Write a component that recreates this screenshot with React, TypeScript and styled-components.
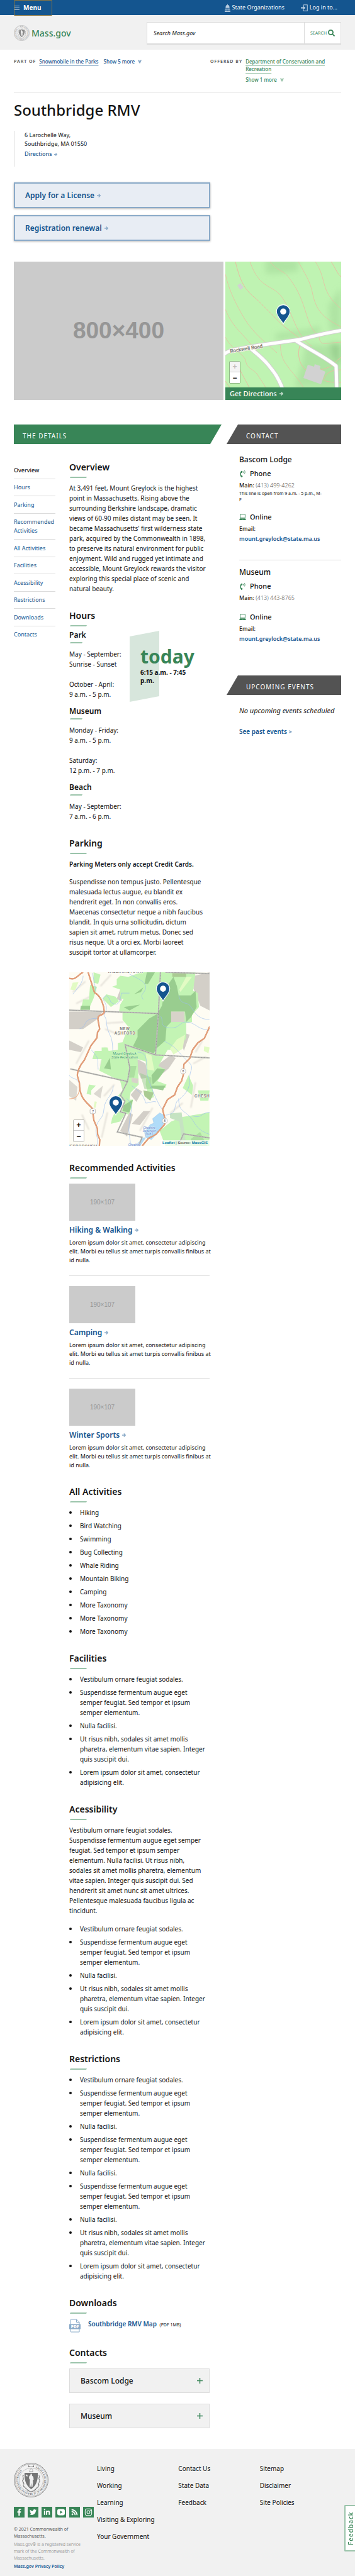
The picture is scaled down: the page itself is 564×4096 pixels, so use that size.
import React from "react";
import styled, { createGlobalStyle, css } from "styled-components";
import {
  FaFacebookF,
  FaInstagram,
  FaLinkedinIn,
  FaPhoneVolume,
  FaRss,
  FaSearch,
  FaTwitter,
} from "react-icons/fa";

const blue = "#14558f";
const blueSoft = "#8aaac8";
const green = "#388557";
const greenSoft = "#9bc4ab";
const ink = "#141414";
const line = "#dcdcdc";
const panel = "#f1f1f1";
const slate = "#535353";

const GlobalStyle = createGlobalStyle`
  *, *::before, *::after { box-sizing: border-box; }
  body {
    margin: 0;
    background: #fff;
    color: ${ink};
    font: 400 10px/16px "Noto Sans", "Open Sans", sans-serif;
  }
  h1, h2, h3, p, ul, address { margin: 0; padding: 0; font-style: normal; }
  a { color: ${blue}; text-decoration: none; }
  button, input { font-family: inherit; }
  svg { display: block; flex: none; }
`;

/* ---------- shared drawings ---------- */

const Arrow = ({ size = 6, color = blueSoft }: { size?: number; color?: string }) => (
  <svg width={size} height={size} viewBox="0 0 12 12" fill="none" stroke={color} strokeWidth="3" aria-hidden>
    <path d="M0 6h10M5.500 1l5 5-5 5" />
  </svg>
);

const Chevron = ({ color, size = 6 }: { color: string; size?: number }) => (
  <svg width={size} height={size} viewBox="0 0 12 12" fill={color} aria-hidden>
    <path d="M0 1h4l2 3 2-3h4L7.500 11h-3z" />
  </svg>
);

const Seal = ({ size, color, id }: { size: number; color: string; id: string }) => (
  <svg width={size} height={size} viewBox="0 0 110 110" fill="none" stroke={color} role="img" aria-label="Massachusetts seal">
    <defs>
      <path id={id} d="M55 14a41 41 0 1 1-.1 0" />
    </defs>
    <circle cx="55" cy="55" r="54" strokeWidth="1.500" />
    <circle cx="55" cy="55" r="51" strokeWidth="1" />
    <circle cx="55" cy="55" r="38" strokeWidth="1.500" strokeDasharray="1 1" />
    <text fill={color} stroke="none" fontFamily="Liberation Serif, serif" fontSize="9" fontWeight="700">
      <textPath href={`#${id}`} startOffset="14">
        SIGILLUM REIPUBLICÆ MASSACHUSETTENSIS
      </textPath>
    </text>
    <path d="M46 8l5 3h8l5-3v6l-5-2h-8l-5 2z" fill={color} stroke="none" />
    <path d="M50 28c1-6 3-9 5-10 3 2 6 5 5 10zM48 29h14" strokeWidth="1" />
    <path d="M34 32h42c1 20-3 40-21 52-18-12-22-32-21-52z" fill={color} stroke="none" />
    <path d="M31 40c-6 2 2 8-2 14s4 8 2 15 5 9 8 13 9 8 16 10c7-2 13-6 16-10s10-6 8-13 6-9 2-15 4-12-2-14" strokeWidth="3" strokeDasharray="3 1" />
    <path d="M41 36l1 3h3l-2 2 1 3-3-2-3 2 1-3-2-2h3z" fill="#f1f1f1" stroke="none" />
    <path d="M53 35h4l1 6 4 4 1 9-3 1 1 8-2 13h-3l-1-12-2 12h-3l1-22-3-5 1-7 4-3z" fill="#f1f1f1" stroke="none" />
  </svg>
);

const Capitol = () => (
  <svg width="9" height="13" viewBox="0 0 24 34" fill="#b8cce0" aria-hidden>
    <path d="M11 0h2v4h-2zM12 4c5 0 8 4 8 9v3H4v-3c0-5 3-9 8-9zM3 17h18v2H3zM4 20h2v3H4zM9 20h2v3H9zM14 20h2v3h-2zM18 20h2v3h-2zM1 24h22v3H1zM1 28h3v3H1zM7 28h3v3H7zM13 28h3v3h-3zM20 28h3v3h-3zM0 31h24v3H0z" />
  </svg>
);

const LoginMark = () => (
  <svg width="11" height="11" viewBox="0 0 30 30" aria-hidden>
    <path d="M11 2h17v26H11v-5M11 2v6" fill="none" stroke="#b8cce0" strokeWidth="3" />
    <path d="M0 12h10V6l10 9-10 9v-6H0z" fill="#b8cce0" />
  </svg>
);

const Laptop = () => (
  <svg width="11" height="10" viewBox="0 0 30 28" aria-hidden>
    <path d="M4 2h22v16H4z" fill="none" stroke={green} strokeWidth="2.500" />
    <path d="M3 20h24l3 8H0z" fill={green} />
    <path d="M12 24h6v2h-6z" fill={greenSoft} />
  </svg>
);

const PdfMark = () => (
  <svg width="18" height="22" viewBox="0 0 36 44" aria-hidden>
    <path d="M5 2h18l9 9v31H5zM23 2v9h9" fill="#fff" stroke={blueSoft} strokeWidth="2" />
    <rect y="17" width="36" height="16" fill={blueSoft} />
    <text x="18" y="30" textAnchor="middle" fill="#fff" fontFamily="Noto Sans, sans-serif" fontSize="13" fontWeight="900">
      PDF
    </text>
  </svg>
);

const markerPath = "M0 0C-6-14-29-32-29-53a29 29 0 0 1 58 0C29-32 6-14 0 0z";

const Marker = ({ x, y, k = 1 }: { x: number; y: number; k?: number }) => (
  <g transform={`translate(${x} ${y}) scale(${k})`}>
    <path d={markerPath} fill={blue} stroke="#fff" strokeWidth="3" />
    <circle cy="-53" r="13" fill="#fff" />
  </g>
);

/* ---------- top of page ---------- */

const Page = styled.div`
  position: relative;
  width: 100%;
`;

const TopBar = styled.nav`
  display: flex;
  align-items: center;
  height: 24px;
  padding: 0 28px 0 22px;
  background: ${blue};
`;

const MenuButton = styled.button`
  display: flex;
  align-items: center;
  gap: 6px;
  width: 61px;
  height: 25px;
  margin: 0 auto 0 0;
  padding: 0;
  border: 1px solid #8a7642;
  border-radius: 1px;
  background: none;
  color: #fff;
  font-size: 10px;
  font-weight: 700;
`;

const Bars = styled.span`
  width: 8px;
  height: 7px;
  border: solid #b8cce0;
  border-width: 1px 0;
  background: linear-gradient(#b8cce0, #b8cce0) center / 100% 1px no-repeat;
`;

const TopLink = styled.a`
  display: flex;
  align-items: center;
  gap: 3px;
  margin-left: 26px;
  color: #fff;
  font-size: 9px;
  font-weight: 400;
`;

const BrandBar = styled.header`
  display: flex;
  align-items: center;
  justify-content: space-between;
  height: 55px;
  padding: 6px 22px 4px;
  background: ${panel};
`;

const Brand = styled.a`
  display: flex;
  align-items: center;
  gap: 3px;
  color: ${green};
  font-size: 14px;
  font-weight: 500;
`;

const SearchForm = styled.form`
  display: flex;
  flex: 0 1 309px;
  height: 36px;
  border: 1px solid ${line};
  border-bottom-width: 2px;
  background: #fff;
`;

const SearchInput = styled.input`
  flex: 1;
  min-width: 0;
  padding: 0 10px;
  border: 0;
  outline: 0;
  background: none;
  font-size: 9px;
  font-style: italic;
  &::placeholder { color: ${ink}; opacity: 1; }
`;

const SearchButton = styled.button`
  display: flex;
  align-items: center;
  justify-content: center;
  gap: 2px;
  width: 58px;
  padding: 0;
  border: 0;
  border-left: 1px solid ${line};
  background: none;
  color: ${green};
  font-size: 7px;
  svg { font-size: 11px; }
`;

const Wrap = styled.div`
  padding: 0 22px;
`;

const Relations = styled.div`
  display: flex;
  justify-content: space-between;
  height: 68px;
  padding-top: 13px;
  border-bottom: 1px solid ${line};
  font-size: 8px;
  font-weight: 500;
  line-height: 12px;
`;

const Relation = styled.div<{ $width?: string }>`
  display: flex;
  width: ${(p) => p.$width ?? "auto"};
`;

const RelationLabel = styled.span`
  flex: none;
  margin-right: 5px;
  color: ${slate};
  font-size: 7px;
  font-weight: 600;
  letter-spacing: 1px;
  text-transform: uppercase;
`;

const RelationLinks = styled.div<{ $stack?: boolean }>`
  display: flex;
  flex-direction: ${(p) => (p.$stack ? "column" : "row")};
  align-items: flex-start;
  gap: ${(p) => (p.$stack ? 5 : 8)}px;
`;

const LineLink = styled.a<{ $green?: boolean }>`
  color: ${(p) => (p.$green ? green : blue)};
  text-decoration: underline 1px ${(p) => (p.$green ? greenSoft : blueSoft)};
  text-decoration-skip-ink: none;
  text-underline-offset: 3px;
`;

const MoreButton = styled.button<{ $green?: boolean }>`
  display: flex;
  align-items: center;
  gap: 5px;
  padding: 0;
  border: 0;
  background: none;
  color: ${(p) => (p.$green ? green : blue)};
  font-size: 8px;
  font-weight: 500;
  line-height: 12px;
`;

const Title = styled.h1`
  margin: 12px 0 17px;
  font-size: 24px;
  font-weight: 500;
  line-height: 32px;
`;

const AddressBlock = styled.address`
  height: 57px;
  padding: 0 0 0 16px;
  border-left: 1px solid ${line};
  font-size: 9px;
  line-height: 14px;
`;

const ArrowLink = styled.a<{ $size?: number }>`
  display: flex;
  align-items: center;
  gap: 4px;
  font-size: ${(p) => p.$size ?? 9}px;
  font-weight: ${(p) => (p.$size === 12 ? 600 : 500)};
`;

const DirectionsLink = styled(ArrowLink)`
  gap: 3px;
  margin-top: 2px;
`;

const Actions = styled.div`
  display: flex;
  flex-direction: column;
  gap: 11px;
  width: 60%;
  margin: 25px 0 33px;
`;

const ActionButton = styled.a`
  display: flex;
  align-items: center;
  gap: 4px;
  height: 41px;
  padding: 0 16px;
  border: 2px solid ${blueSoft};
  background: #e8edf4;
  box-shadow: 0 1px 3px rgba(0, 0, 0, 0.3);
  font-size: 12px;
  font-weight: 600;
`;

const Hero = styled.div`
  display: grid;
  grid-template-columns: minmax(0, 333fr) minmax(0, 184fr);
  gap: 3px;
  height: 220px;
`;

const Placeholder = styled.div<{ $size: number; $bold?: boolean }>`
  display: flex;
  align-items: center;
  justify-content: center;
  background: #cbcbcb;
  color: #969696;
  font: ${(p) => (p.$bold ? 700 : 400)} ${(p) => p.$size}px "Liberation Sans Narrow", "Liberation Sans", sans-serif;
`;

const MapPanel = styled.div`
  position: relative;
  overflow: hidden;
  background: #bff3b2;
  > svg { width: 100%; height: 100%; }
`;

const HeroMap = styled.div`
  display: grid;
  grid-template-rows: minmax(0, 1fr) 20px;
`;

const MapCta = styled.a`
  display: flex;
  align-items: center;
  gap: 4px;
  padding: 0 7px;
  background: ${green};
  color: #fff;
  font-size: 11px;
  font-weight: 500;
`;

const ZoomControl = styled.div`
  position: absolute;
  bottom: 6px;
  left: 6px;
  display: flex;
  flex-direction: column;
  width: 18px;
  border: 1px solid rgba(0, 0, 0, 0.25);
  border-radius: 2px;
  button {
    height: 17px;
    padding: 0;
    border: 0;
    background: #fff;
    color: #000;
    font: 700 12px/16px "Liberation Sans", sans-serif;
  }
  button:first-child { border-bottom: 1px solid #ccc; }
  button:disabled { background: #f4f4f4; color: #bbb; }
`;

const MapCredit = styled.div`
  position: absolute;
  right: 0;
  bottom: 0;
  padding: 0 3px;
  background: rgba(255, 255, 255, 0.7);
  color: #333;
  font: 400 6px/9px "Liberation Sans", sans-serif;
  a { color: #0078a8; font-weight: 700; }
`;

/* ---------- columns ---------- */

const Columns = styled.main`
  display: grid;
  grid-template-columns: minmax(0, 1fr) 182px;
  column-gap: 6px;
  padding: 39px 22px 33px;
`;

const Banner = styled.h2<{ $side?: boolean }>`
  display: flex;
  align-items: center;
  height: 31px;
  margin-right: ${(p) => (p.$side ? 0 : 2)}px;
  padding: 4px 0 0 ${(p) => (p.$side ? 31 : 14)}px;
  background: ${(p) => (p.$side ? slate : green)};
  color: #fff;
  font-size: 10px;
  font-weight: 400;
  letter-spacing: 1px;
  text-transform: uppercase;
  clip-path: ${(p) =>
    p.$side ? "polygon(18px 0, 100% 0, 100% 100%, 0 100%)" : "polygon(0 0, 100% 0, calc(100% - 18px) 100%, 0 100%)"};
`;

const Details = styled.div`
  display: grid;
  grid-template-columns: 66px minmax(0, 1fr);
  column-gap: 22px;
  padding: 27px 21px 0 0;
`;

const SideNav = styled.nav`
  display: flex;
  flex-direction: column;
  padding-top: 1px;
`;

const SideLink = styled.a<{ $current?: boolean }>`
  padding: 7px 0 6px;
  border-bottom: 1px solid ${line};
  color: ${(p) => (p.$current ? ink : blue)};
  font-size: 9px;
  font-weight: ${(p) => (p.$current ? 500 : 400)};
  line-height: 14px;
  &:nth-child(even) { padding-top: 6px; }
  &:last-child { border: 0; }
`;

const Section = styled.section<{ $gap?: number }>`
  & + & { margin-top: ${(p) => p.$gap ?? 23}px; }
`;

const slantBar = css`
  &::after {
    content: "";
    display: block;
    height: 2px;
    margin-left: 1px;
    background: ${greenSoft};
    clip-path: polygon(1px 0, 100% 0, calc(100% - 1px) 100%, 0 100%);
  }
`;

const SectionTitle = styled.h2`
  margin-bottom: 8px;
  font-size: 14px;
  font-weight: 600;
  line-height: 20px;
  ${slantBar}
  &::after { width: 27px; margin-top: 5px; }
`;

const HoursTitle = styled.h3`
  margin: 11px 0 9px;
  font-size: 12px;
  font-weight: 600;
  line-height: 16px;
  ${slantBar}
  &::after { width: 20px; margin-top: 3px; }
  &:first-child { margin-top: -2px; }
`;

const Prose = styled.p`
  margin-right: 4px;
`;

const HoursRow = styled.div`
  display: flex;
`;

const HoursList = styled.div`
  flex: none;
  width: 96px;
  p + p { margin-top: 16px; }
`;

const Today = styled.div`
  position: relative;
  height: 113px;
  margin-top: -1px;
  padding: 22px 20px 0 17px;
  font-weight: 700;
  line-height: 13px;
  &::before {
    content: "";
    position: absolute;
    inset: 0 auto 0 0;
    width: 47px;
    background: #d7e6dc;
    clip-path: polygon(0 9px, 100% 0, 100% calc(100% - 9px), 0 100%);
  }
  * { position: relative; }
`;

const TodayWord = styled.p`
  color: ${green};
  font-size: 30px;
  line-height: 38px;
`;

const Lead = styled.p`
  margin-bottom: 12px;
  font-weight: 600;
`;

const ParkMap = styled(MapPanel)`
  height: 276px;
  margin-top: 24px;
  background: #fefcf3;
`;

const Activity = styled.article`
  padding-bottom: 17px;
  & + & { padding-top: 16px; border-top: 1px solid ${line}; }
  &:last-child { padding-bottom: 0; }
  h3 { margin: 6px 0 4px; line-height: 18px; }
  p { margin-right: -8px; font-size: 9px; line-height: 14px; }
  ${Placeholder} { width: 105px; height: 59px; }
`;

const BulletList = styled.ul<{ $spaced?: boolean }>`
  display: flex;
  flex-direction: column;
  gap: 5px;
  margin: ${(p) => (p.$spaced ? 13 : 0)}px 4px 0 0;
  list-style: none;
  li { position: relative; padding-left: 17px; }
  li::before {
    content: "";
    position: absolute;
    top: 6px;
    left: 0;
    width: 4px;
    height: 4px;
    border-radius: 50%;
    background: ${ink};
  }
`;

const Download = styled.div`
  display: flex;
  gap: 12px;
  height: 19px;
  a { font-weight: 600; }
  small { margin-left: 2px; font-size: 7px; }
`;

const Accordion = styled.button`
  display: flex;
  align-items: center;
  justify-content: space-between;
  width: 100%;
  height: 39px;
  padding: 0 10px 0 17px;
  border: 1px solid ${line};
  background: ${panel};
  color: ${ink};
  font-size: 12px;
  font-weight: 500;
  & + & { margin-top: 17px; }
`;

const Aside = styled.aside`
  padding: 17px 0 0 20px;
`;

const ContactCard = styled.section`
  & + & {
    margin-top: 25px;
    padding-top: 11px;
    border-top: 1px solid ${line};
  }
  > h3:first-child { font-size: 12px; font-weight: 500; }
`;

const ContactKind = styled.h3`
  display: flex;
  align-items: center;
  gap: 6px;
  margin: 6px 0 3px;
  font-size: 11px;
  font-weight: 500;
  svg { color: ${green}; }
`;

const OnlineKind = styled(ContactKind)`
  margin-top: 14px;
`;

const ContactLine = styled.p`
  font-size: 9px;
  font-weight: 500;
  span { color: ${slate}; font-weight: 300; }
  a { font-weight: 600; }
`;

const SmallNote = styled.p`
  width: 134px;
  font-size: 7px;
  line-height: 10px;
`;

const EventsBanner = styled(Banner)`
  margin-top: 50px;
`;

const Events = styled.div`
  padding: 17px 0 0 20px;
  p { margin-bottom: 17px; font-size: 11px; font-style: italic; white-space: nowrap; }
  a { display: flex; gap: 3px; align-items: center; font-weight: 600; }
  svg { transform: rotate(-90deg); }
`;

/* ---------- footer ---------- */

const Footer = styled.footer`
  display: grid;
  grid-template-columns: 132px repeat(3, minmax(0, 1fr));
  min-height: 218px;
  padding: 22px 22px 20px;
  background: ${panel};
`;

const SocialRow = styled.div`
  display: flex;
  gap: 5px;
  margin: 15px 0 13px;
`;

const SocialLink = styled.a`
  display: flex;
  align-items: center;
  justify-content: center;
  width: 17px;
  height: 17px;
  background: ${green};
  color: #fff;
  font-size: 11px;
`;

const Legal = styled.div`
  font-size: 7px;
  line-height: 11px;
  p { color: ${slate}; }
  p + p { margin: 2px 0; color: #767676; font-weight: 300; }
  a { font-weight: 600; }
`;

const FooterLinks = styled.ul`
  display: flex;
  flex-direction: column;
  gap: 11px;
  padding-top: 1px;
  list-style: none;
  a { color: ${ink}; }
`;

const FeedbackTab = styled.button`
  position: absolute;
  right: 0;
  bottom: 55px;
  width: 17px;
  height: 74px;
  padding: 0;
  border: 2px solid ${greenSoft};
  border-left: 0;
  border-radius: 0 2px 2px 0;
  background: #fff;
  color: ${green};
  font-size: 10px;
  font-weight: 500;
  letter-spacing: 1px;
  line-height: 14px;
  writing-mode: vertical-rl;
  transform: rotate(180deg);
`;

/* ---------- data ---------- */

const navItems = [
  "Overview",
  "Hours",
  "Parking",
  "Recommended Activities",
  "All Activities",
  "Facilities",
  "Acessibility",
  "Restrictions",
  "Downloads",
  "Contacts",
];

const vest = "Vestibulum ornare feugiat sodales.";
const susp = "Suspendisse fermentum augue eget semper feugiat. Sed tempor et ipsum semper elementum.";
const nulla = "Nulla facilisi.";
const risus = "Ut risus nibh, sodales sit amet mollis pharetra, elementum vitae sapien. Integer quis suscipit dui.";
const lorem = "Lorem ipsum dolor sit amet, consectetur adipisicing elit.";

const facilities = [vest, susp, nulla, risus, lorem];
const restrictions = [vest, susp, nulla, susp, nulla, susp, nulla, risus, lorem];
const activities = [
  "Hiking",
  "Bird Watching",
  "Swimming",
  "Bug Collecting",
  "Whale Riding",
  "Mountain Biking",
  "Camping",
  "More Taxonomy",
  "More Taxonomy",
  "More Taxonomy",
];

const footerColumns = [
  ["Living", "Working", "Learning", "Visiting & Exploring", "Your Government"],
  ["Contact Us", "State Data", "Feedback"],
  ["Sitemap", "Disclaimer", "Site Policies"],
];

const Bullets = ({ items, spaced }: { items: string[]; spaced?: boolean }) => (
  <BulletList $spaced={spaced}>
    {items.map((item, i) => (
      <li key={i}>{item}</li>
    ))}
  </BulletList>
);

/* ---------- maps ---------- */

const RoadMap = () => (
  <svg viewBox="0 0 184 200" preserveAspectRatio="xMidYMid slice" role="img" aria-label="Map of Rockwell Road">
    <defs>
      <filter id="soft"><feGaussianBlur stdDeviation="5" /></filter>
    </defs>
    <rect width="184" height="200" fill="#bff3b2" />
    <g fill="#a3d898" opacity=".55" filter="url(#soft)">
      <path d="M64-5h52v20l-30 4-22 0zM184 40v70h-18l-2-40zM80 114l50-6 20-6v14l-70 10zM128 132l56 2v66h-74l12-40z" />
      <path d="M165 130h19v36l-14-14z" fill="#7fb877" />
    </g>
    <g fill="none" stroke="#e8bda2" strokeWidth=".8">
      <path d="M0 20c6 26 16 46 30 70s38 42 52 55M39 0c8 22 16 32 30 40s18 10 28 28c14 28 20 54 40 66M71 0c10 14 18 12 28 23 14 18 20 30 28 55 6 20 10 30 22 42M116 0c12 22 18 30 22 48 6 30 16 40 46 56M143 0c16 24 10 40 26 60l15 16" />
      <path d="M0 76c10 24 20 32 38 52 8 10 16 16 16 24M0 120c10 20 26 24 32 36 2 14 8 12 18 22 6 10 10 14 16 26M87 130c2 26 6 28 16 42 8 10 16 18 22 30M149 118c0 12 6 13 12 12l23-2" />
      <path d="M16 0c8 34 16 46 34 60 8 8 18 18 26 26 16 18 30 26 42 36M168 0c8 12 10 20 16 24M118 134c-4 16 0 30 10 38M184 152c-12 8-10 12-20 16s-12 4-14 2M184 172c-18 0-24 6-28 16 6 4 18 4 28 4M0 190l7 10M22 170l16 30" strokeWidth="1" />
    </g>
    <g fill="none" strokeLinejoin="round">
      <g stroke="#d2d0d0" strokeWidth="7">
        <path d="M-2 147C10 137 24 136 42 134C60 131 98 125 120 122C142 116 165 107 186 110" opacity="0" />
        <path d="M-2 148C6 140 20 138 38 134L112 125C140 119 162 108 186 109" opacity="0" />
        <path d="M-3 148C8 138 30 138 54 133L118 124C142 118 164 112 187 109" />
        <path d="M40 138C52 148 60 154 68 164S82 180 91 202M111 125C130 138 156 150 176 166L177 202" />
      </g>
      <g stroke="#fff" strokeWidth="5">
        <path d="M-3 148C8 138 30 138 54 133L118 124C142 118 164 112 187 109" />
        <path d="M40 138C52 148 60 154 68 164S82 180 91 202M111 125C130 138 156 150 176 166L177 202" />
      </g>
    </g>
    <path d="M19 38l5-4 5 7-5 4zM131 164l10 3 1-4 9 3-1 5 9 4-7 20-28-10z" fill="#d2d2d2" />
    <text transform="translate(8 145) rotate(-9)" fill="#555" stroke="#f3f0e6" strokeWidth="2" paintOrder="stroke" fontFamily="Roboto, sans-serif" fontSize="8">
      Rockwell Road
    </text>
    <Marker x={92} y={99} k={0.37} />
  </svg>
);

const ReliefMap = () => (
  <svg viewBox="30 30 1212 1500" preserveAspectRatio="xMidYMid slice" role="img" aria-label="Map of Mount Greylock State Reservation">
    <defs>
      <filter id="relief"><feGaussianBlur stdDeviation="7" /></filter>
    </defs>
    <rect x="30" y="30" width="1212" height="1500" fill="#fefcf3" />
    <g fill="#d3cfc8">
      <path d="M30 370l290 0-40 60-130 90-120 0zM30 620l120 60-20 40-100-20zM470 180l30 0-20 100-40-20zM1110 60l132-30v330l-80-40-60-150zM780 840l120-90 50 20-60 90-70 60-60 60zM620 780l70 40 20 120-60 10-50-110zM560 1090l50-60 50 30-50 90zM570 1340l100-110 60 0-90 120zM470 1400l80-160 30 20-50 190zM1000 640l40-80 30 10-50 140zM900 370h130v90h-130z" />
      <path d="M30 960l70 60-10 120-60-40zM240 1080l80-70-20 110zM1080 1330l80 0-40 90z" opacity=".8" />
    </g>
    <g fill="none" stroke="#dcd8d0" strokeWidth="9" filter="url(#relief)">
      <path d="M60 200l110-90M300 150l90-100M90 300l120-60M350 470l150-10M340 520l120 50M90 820l110-200M340 680l-40 160M420 1000l-90 100M640 1400l110-200M1100 820l110-60M1120 980l-40 220M900 1250l110-90M140 1260l60 130M360 1240l-50 220M1180 620l-60 100" />
    </g>
    <g fill="#c3f4b4">
      <path d="M440 90L470 60L540 70L650 30L1120 30L1100 190L1140 210L1150 330L1090 400L1090 460L1040 470L1040 600L960 700L880 700L800 840L860 870L790 970L870 1000L860 1030L750 1030L760 1110L720 1120L690 1000L700 880L690 800L620 780L630 1000L560 1070L550 1130L580 1130L570 1200L540 1260L480 1230L510 1150L440 1110L490 1050L470 970L390 930L290 880L310 780L230 780L250 710L310 710L310 680L360 680L370 710L450 700L450 640L490 635L540 500L490 440L490 380L460 370L470 310L500 260L470 260L470 180L400 155L440 140z" />
      <path d="M210 140l60 15-30 100-40 90-70 10 20-90 50 0zM240 30l60 20-20 80-40-10zM350 220l80 20 30 40-70 50-70-70zM200 1000l60 10-40 40 0 40-40-10zM810 1400l100-80 100-40 230-40v290h-380zM1060 920l40 90-10 80-80-60zM1140 1050l102 0-10 90-70 0zM400 1290l30-60 90 10-50 80-80 20z" />
    </g>
    <g fill="#e2fbc4">
      <path d="M40 180l20-60 50-5-30 70zM690 730l50 20 25 130-60-10zM900 690l60-80 70-40-20 120-80 50zM250 1145l18 5-10 50-18 0zM980 180l60-110 50 0-100 130zM1195 670l47 10-10 50-40-20z" />
    </g>
    <g fill="#95c98b">
      <path d="M860 170L930 70L960 150L975 230L1080 230L1120 190L1130 330L1080 420L1040 460L1030 370L910 370L910 460L870 500L860 620L780 690L760 730L660 700L580 670L620 590L620 530L720 430L790 390L830 320zM700 30h70l-60 100h-30zM590 220l80-60-20 40zM790 860l70 10-60 80-50 50-10-80zM500 1180l80-50-30 110-60-10zM740 1010l120 0-20 40-110-20zM130 320h80l0 35-85 0zM500 330l140-20-90 50zM330 860l50-90 10 100z" opacity=".9" />
      <path d="M640 900l100 40 0 100-60 0zM550 840l60 0-20 100-50 0zM1080 1470l80-60 60 120h-120z" opacity=".5" />
    </g>
    <path d="M570 940l60 10-10 40-50-10zM910 370h115v90h-115z" fill="#d8d3ca" />
    <path d="M920 30h120v40h-120zM670 1050l90 20-30 70-50-40z" fill="#aacb93" />
    <path d="M900 1250l100-10 40 280h-30l-30-200-80-30z" fill="#c6e3c2" />
    <path d="M810 1245l40 20 0 60-30 60-80 90-50-20-10-40 50-70 30-10-10-40zM620 1510l50-50 20 0-50 70z" fill="#b0dcf8" stroke="#8db4e6" strokeWidth="2" />
    <g fill="none" stroke="#9bbdf0" strokeWidth="3.500">
      <path d="M550 45c90 50 130 60 140 110 0 60-60 60-20 110M232 35c10 80 20 100 30 170M150 60c0 60-50 110-90 160M320 260c30-50 50-20 70 30 60 40 80 0 90-80l70 0M320 260c40 60 40 90 10 140 40 60 0 70 60 190 20 60 10 100 20 130M120 518c70-20 20-90 150-90M975 230c20 90 70 50 100 90 30 40 60 120 165 117M820 410c30 50-20 80 70 100 120 10 80-80 200-40 60 30 60 50 150 60" />
      <path d="M850 625c120 60 90 70 210 180 60 60 0 60 10 180-10 70-40 100-110 160-30 60 0 110-100 120M620 720c80 0 80 60 80 180 20 90 90 260 130 310M570 1010c60 50 100 70 120 150 40 0 60-20 90-10M525 1120c80 80 20 110 20 280l15 120M410 1010c0 90-70 100-80 200-10 80-20 60-60 130-30 100 20 100 0 190M220 700c80 90 50 80 60 170M30 920c20 40 90 10 90 110M975 1120c0 110 40 100 100 160 50 60 50 110 165 150M1242 1240c-70 0-70 60-150 30" />
    </g>
    <g fill="none" stroke="#c2c2be" strokeWidth="12">
      <path d="M30 357l770 30 17-357M800 387l-25 357-262-88 40 200-20 118L40 865M775 744l467 26M533 974l-60 120 38 50-40 92 48 12-74 162 214 46-30 75M1242 1462l-225-36-45 100M860 30l382 12" />
    </g>
    <g fill="none" stroke="#666" strokeWidth="2.500" strokeDasharray="14 4 4 4">
      <path d="M30 357l770 30 17-357M800 387l-25 357-262-88 40 200-20 118L40 865M775 744l467 26M533 974l-60 120 38 50-40 92 48 12-74 162 214 46-30 75M1242 1462l-225-36-45 100M860 30l382 12" />
    </g>
    <path d="M30 1124c50 0 80-20 88-80" fill="none" stroke="#edb795" strokeWidth="7" />
    {["#cf8763", "#e8a27c"].map((color, i) => (
      <g key={color} fill="none" stroke={color} strokeWidth={i ? 8 : 12} strokeLinejoin="round">
        <path d="M193 30L248 205C308 235 330 320 333 373C323 413 273 385 278 440L293 520L274 550L270 595L217 665L160 790C125 830 90 900 103 935L118 985C118 1125 180 1150 228 1205L243 1310L273 1380L275 1430L294 1476L290 1530" />
        <path d="M30 82c60 20 70-30 120-52M1242 500L1197 600L1140 640L1095 700L1070 775L1020 825L1015 915L1000 970L965 1020L940 1090L878 1130L836 1215L855 1290L853 1345L780 1430L715 1465L660 1530" />
      </g>
    ))}
    <g fill="#fff" stroke="#999" strokeWidth="3">
      <circle cx="1014" cy="885" r="22" />
      <circle cx="855" cy="1313" r="22" />
      <rect x="210" y="1210" width="46" height="42" rx="10" />
    </g>
    <g fontFamily="Roboto, sans-serif" fontSize="28" fill="#444" textAnchor="middle">
      <text x="1014" y="895">8</text>
      <text x="855" y="1323">8</text>
      <text x="235" y="1243">7</text>
    </g>
    <g fontFamily="Roboto, sans-serif" fontSize="36" fontWeight="500" fill="#76706b" stroke="#fefcf3" strokeWidth="6" paintOrder="stroke" letterSpacing="3" textAnchor="middle">
      <text x="510" y="528">NEW</text>
      <text x="512" y="570">ASHFORD</text>
      <text x="515" y="38">WILLIAMSTOWN</text>
      <text x="1112" y="1111" textAnchor="start">CHESHIRE</text>
      <text x="274" y="1545" textAnchor="end">LANESBOROUGH</text>
    </g>
    <g fontFamily="Roboto, sans-serif" fontSize="30" fontStyle="italic" fill="#2e9a5c" stroke="#e0f7d8" strokeWidth="4" paintOrder="stroke" textAnchor="middle">
      <text x="508" y="744">Mount Greylock</text>
      <text x="508" y="773">State Reservation</text>
    </g>
    <g fontFamily="Roboto, sans-serif" fontSize="28" fontStyle="italic" fill="#5a86cf" stroke="#eef4fa" strokeWidth="3" paintOrder="stroke" textAnchor="middle">
      <text x="721" y="1382">Cheshire</text>
      <text x="721" y="1408">Reservoir</text>
      <text x="721" y="1436">[N.B.]</text>
      <text x="593" y="1532">Cheshire</text>
    </g>
    <Marker x={840} y={278} k={2} />
    <Marker x={432} y={1262} k={2} />
  </svg>
);

/* ---------- page ---------- */

const PhoneKind = () => (
  <ContactKind>
    <FaPhoneVolume size={11} aria-hidden />
    Phone
  </ContactKind>
);

const OnlineBlock = () => (
  <>
    <OnlineKind>
      <Laptop />
      Online
    </OnlineKind>
    <ContactLine>Email:</ContactLine>
    <ContactLine>
      <a href="mailto:mount.greylock@state.ma.us">mount.greylock@state.ma.us</a>
    </ContactLine>
  </>
);

const social = [
  { name: "Facebook", icon: <FaFacebookF /> },
  { name: "Twitter", icon: <FaTwitter /> },
  { name: "LinkedIn", icon: <FaLinkedinIn /> },
  {
    name: "YouTube",
    icon: (
      <svg width="12" height="11" viewBox="0 0 24 20">
        <rect width="24" height="20" rx="6" fill="#fff" />
        <path d="M9 5l8 5-8 5z" fill={green} />
      </svg>
    ),
  },
  { name: "RSS", icon: <FaRss /> },
  { name: "Instagram", icon: <FaInstagram size={13} /> },
];

export default function App() {
  return (
    <Page>
      <GlobalStyle />
      <TopBar>
        <MenuButton type="button">
          <Bars />
          Menu
        </MenuButton>
        <TopLink href="#organizations">
          <Capitol />
          State Organizations
        </TopLink>
        <TopLink href="#login">
          <LoginMark />
          Log in to...
        </TopLink>
      </TopBar>
      <BrandBar>
        <Brand href="#home">
          <Seal size={25} color="#8a8a8a" id="seal-top" />
          Mass.gov
        </Brand>
        <SearchForm role="search">
          <SearchInput type="search" placeholder="Search Mass.gov" aria-label="Search Mass.gov" />
          <SearchButton type="button">
            SEARCH
            <FaSearch aria-hidden />
          </SearchButton>
        </SearchForm>
      </BrandBar>

      <Wrap>
        <Relations>
          <Relation>
            <RelationLabel>Part of</RelationLabel>
            <RelationLinks>
              <LineLink href="#parks">Snowmobile in the Parks</LineLink>
              <MoreButton type="button">
                Show 5 more <Chevron color={blueSoft} />
              </MoreButton>
            </RelationLinks>
          </Relation>
          <Relation $width="208px">
            <RelationLabel>Offered by</RelationLabel>
            <RelationLinks $stack>
              <LineLink $green href="#dcr">Department of Conservation and Recreation</LineLink>
              <MoreButton $green type="button">
                Show 1 more <Chevron color={greenSoft} />
              </MoreButton>
            </RelationLinks>
          </Relation>
        </Relations>

        <Title>Southbridge RMV</Title>
        <AddressBlock>
          6 Larochelle Way,
          <br />
          Southbridge, MA 01550
          <DirectionsLink href="#directions">
            Directions <Arrow size={5} />
          </DirectionsLink>
        </AddressBlock>

        <Actions>
          <ActionButton href="#license">Apply for a License <Arrow /></ActionButton>
          <ActionButton href="#renewal">Registration renewal <Arrow /></ActionButton>
        </Actions>

        <Hero>
          <Placeholder $size={37} $bold>800×400</Placeholder>
          <HeroMap>
            <MapPanel>
              <RoadMap />
              <ZoomControl>
                <button type="button" aria-label="Zoom in" disabled>+</button>
                <button type="button" aria-label="Zoom out">−</button>
              </ZoomControl>
            </MapPanel>
            <MapCta href="#map">Get Directions <Arrow color="#c3dccc" /></MapCta>
          </HeroMap>
        </Hero>
      </Wrap>

      <Columns>
        <div>
          <Banner>The Details</Banner>
          <Details>
            <SideNav aria-label="Sections">
              {navItems.map((item, i) => (
                <SideLink key={item} href={`#${item}`} $current={i === 0}>{item}</SideLink>
              ))}
            </SideNav>
            <div>
              <Section>
                <SectionTitle>Overview</SectionTitle>
                <Prose>
                  At 3,491 feet, Mount Greylock is the highest point in Massachusetts. Rising above the
                  surrounding Berkshire landscape, dramatic views of 60-90 miles distant may be seen. It
                  became Massachusetts' first wilderness state park, acquired by the Commonwealth in 1898,
                  to preserve its natural environment for public enjoyment. Wild and rugged yet intimate and
                  accessible, Mount Greylock rewards the visitor exploring this special place of scenic and
                  natural beauty.
                </Prose>
              </Section>

              <Section>
                <SectionTitle>Hours</SectionTitle>
                <HoursRow>
                  <HoursList>
                    <HoursTitle>Park</HoursTitle>
                    <p>May - September:<br />Sunrise - Sunset</p>
                    <p>October - April:<br />9 a.m. - 5 p.m.</p>
                    <HoursTitle>Museum</HoursTitle>
                    <p>Monday - Friday:<br />9 a.m. - 5 p.m.</p>
                    <p>Saturday:<br />12 p.m. - 7 p.m.</p>
                    <HoursTitle>Beach</HoursTitle>
                    <p>May - September:<br />7 a.m. - 6 p.m.</p>
                  </HoursList>
                  <Today>
                    <TodayWord>today</TodayWord>
                    <p>6:15 a.m. - 7:45 p.m.</p>
                  </Today>
                </HoursRow>
              </Section>

              <Section>
                <SectionTitle>Parking</SectionTitle>
                <Lead>Parking Meters only accept Credit Cards.</Lead>
                <Prose>
                  Suspendisse non tempus justo. Pellentesque malesuada lectus augue, eu blandit ex hendrerit
                  eget. In non convallis eros. Maecenas consectetur neque a nibh faucibus blandit. In quis
                  urna sollicitudin, dictum sapien sit amet, rutrum metus. Donec sed risus neque. Ut a orci
                  ex. Morbi laoreet suscipit tortor at ullamcorper.
                </Prose>
                <ParkMap>
                  <ReliefMap />
                  <ZoomControl>
                    <button type="button" aria-label="Zoom in">+</button>
                    <button type="button" aria-label="Zoom out">−</button>
                  </ZoomControl>
                  <MapCredit>
                    <a href="#leaflet">Leaflet</a> | Source: <a href="#massgis">MassGIS</a>
                  </MapCredit>
                </ParkMap>
              </Section>

              <Section>
                <SectionTitle>Recommended Activities</SectionTitle>
                {["Hiking & Walking", "Camping", "Winter Sports"].map((name) => (
                  <Activity key={name}>
                    <Placeholder $size={10}>190×107</Placeholder>
                    <h3>
                      <ArrowLink $size={12} href={`#${name}`}>{name} <Arrow /></ArrowLink>
                    </h3>
                    <p>
                      Lorem ipsum dolor sit amet, consectetur adipiscing elit. Morbi eu tellus sit amet
                      turpis convallis finibus at id nulla.
                    </p>
                  </Activity>
                ))}
              </Section>

              <Section $gap={25}>
                <SectionTitle>All Activities</SectionTitle>
                <Bullets items={activities} />
              </Section>

              <Section>
                <SectionTitle>Facilities</SectionTitle>
                <Bullets items={facilities} />
              </Section>

              <Section>
                <SectionTitle>Acessibility</SectionTitle>
                <Prose>
                  Vestibulum ornare feugiat sodales. Suspendisse fermentum augue eget semper feugiat. Sed
                  tempor et ipsum semper elementum. Nulla facilisi. Ut risus nibh, sodales sit amet mollis
                  pharetra, elementum vitae sapien. Integer quis suscipit dui. Sed hendrerit sit amet nunc
                  sit amet ultrices. Pellentesque malesuada faucibus ligula ac tincidunt.
                </Prose>
                <Bullets items={facilities} spaced />
              </Section>

              <Section>
                <SectionTitle>Restrictions</SectionTitle>
                <Bullets items={restrictions} />
              </Section>

              <Section>
                <SectionTitle>Downloads</SectionTitle>
                <Download>
                  <PdfMark />
                  <span>
                    <a href="#pdf">Southbridge RMV Map</a> <small>(PDF 1MB)</small>
                  </span>
                </Download>
              </Section>

              <Section>
                <SectionTitle>Contacts</SectionTitle>
                {["Bascom Lodge", "Museum"].map((name) => (
                  <Accordion key={name} type="button" aria-expanded="false">
                    {name}
                    <svg width="9" height="9" viewBox="0 0 9 9" stroke={green} strokeWidth="1.500" aria-hidden>
                      <path d="M4.500 0v9M0 4.500h9" />
                    </svg>
                  </Accordion>
                ))}
              </Section>
            </div>
          </Details>
        </div>

        <div>
          <Banner $side>Contact</Banner>
          <Aside>
            <ContactCard>
              <h3>Bascom Lodge</h3>
              <PhoneKind />
              <ContactLine>Main: <span>(413) 499-4262</span></ContactLine>
              <SmallNote>This line is open from 9 a.m. - 5 p.m., M-F</SmallNote>
              <OnlineBlock />
            </ContactCard>
            <ContactCard>
              <h3>Museum</h3>
              <PhoneKind />
              <ContactLine>Main: <span>(413) 443-8765</span></ContactLine>
              <OnlineBlock />
            </ContactCard>
          </Aside>
          <EventsBanner $side>Upcoming Events</EventsBanner>
          <Events>
            <p>No upcoming events scheduled</p>
            <a href="#events">See past events <Chevron color={blueSoft} size={5} /></a>
          </Events>
        </div>
      </Columns>

      <Footer>
        <div>
          <Seal size={55} color="#757575" id="seal-bottom" />
          <SocialRow>
            {social.map((s) => (
              <SocialLink key={s.name} href={`#${s.name}`} aria-label={s.name}>{s.icon}</SocialLink>
            ))}
          </SocialRow>
          <Legal>
            <p>© 2021 Commonwealth of<br />Massachusetts.</p>
            <p>Mass.gov® is a registered service<br />mark of the Commonwealth of<br />Massachusetts.</p>
            <a href="#privacy">Mass.gov Privacy Policy</a>
          </Legal>
        </div>
        {footerColumns.map((links) => (
          <FooterLinks key={links[0]}>
            {links.map((label) => (
              <li key={label}><a href={`#${label}`}>{label}</a></li>
            ))}
          </FooterLinks>
        ))}
      </Footer>
      <FeedbackTab type="button">Feedback</FeedbackTab>
    </Page>
  );
}
